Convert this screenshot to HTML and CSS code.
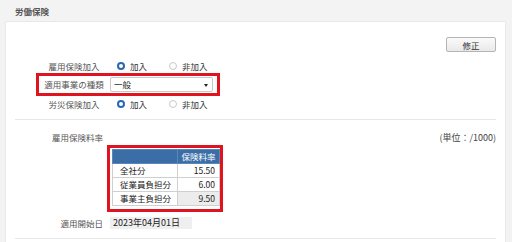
FILE: index.html
```html
<!DOCTYPE html>
<html lang="ja">
<head>
<meta charset="utf-8">
<link rel="stylesheet" href="styles.css">
</head>
<body>
<div class="titlebar">労働保険</div>
<div class="panel">
  <div class="toolbar"><button class="btn">修正</button></div>
  <div class="section1">
    <div class="row">
      <span class="label">雇用保険加入</span>
      <span class="radios">
        <span class="radio on"></span><span class="rtext">加入</span>
        <span class="radio"></span><span class="rtext">非加入</span>
      </span>
    </div>
    <div class="row">
      <div class="hl">
        <span class="label">適用事業の種類</span>
        <span class="select">一般<span class="caret"></span></span>
      </div>
    </div>
    <div class="row">
      <span class="label">労災保険加入</span>
      <span class="radios">
        <span class="radio on"></span><span class="rtext">加入</span>
        <span class="radio"></span><span class="rtext">非加入</span>
      </span>
    </div>
  </div>
  <div class="section2">
    <div class="rate-head">
      <span class="label2">雇用保険料率</span>
      <span class="unit">(単位：/1000)</span>
    </div>
    <div class="tablebox">
      <table class="rates">
        <thead><tr><th></th><th>保険料率</th></tr></thead>
        <tbody>
          <tr><td>全社分</td><td class="num">15.50</td></tr>
          <tr><td>従業員負担分</td><td class="num">6.00</td></tr>
          <tr><td>事業主負担分</td><td class="num calc">9.50</td></tr>
        </tbody>
      </table>
    </div>
    <div class="daterow">
      <span class="label2">適用開始日</span>
      <span class="datebox">2023年04月01日</span>
    </div>
  </div>
</div>
</body>
</html>
```

FILE: styles.css
```css
* { box-sizing: border-box; }
html, body { margin: 0; padding: 0; }
body {
  background: #f3f3f3;
  font-family: "Noto Sans CJK JP", "Noto Sans", sans-serif;
  font-size: 8.5px;
  color: #444;
  width: 512px;
  height: 242px;
  overflow: hidden;
}
.titlebar {
  height: 22px;
  line-height: 22px;
  padding-left: 15px;
  font-weight: bold;
  font-size: 8.5px;
  color: #555;
}
.panel {
  margin-left: 6px;
  width: 499px;
  height: 240px;
  background: #fff;
  box-shadow: 0 0 1px rgba(0,0,0,0.25);
  padding: 0 9px;
}
.toolbar {
  display: flex;
  justify-content: flex-end;
  padding-top: 15px;
}
.btn {
  width: 50px;
  height: 15px;
  padding: 0;
  margin: 0;
  font: inherit;
  color: #333;
  background: linear-gradient(#fafafa, #e9e9e9);
  border: 1px solid #b5b5b5;
  border-radius: 2px;
}
.section1 {
  margin-top: 4px;
  padding-bottom: 6px;
  border-bottom: 1px solid #e6e6e6;
}
.row {
  height: 19px;
  display: flex;
  align-items: center;
  padding-left: 29px;
}
.label {
  width: 60px;
  text-align: center;
  color: #555;
  flex: none;
  white-space: nowrap;
}
.radios {
  display: flex;
  align-items: center;
  margin-left: 13px;
}
.radio {
  width: 8px;
  height: 8px;
  border-radius: 50%;
  border: 1px solid #c8c8c8;
  margin-right: 5px;
  flex: none;
}
.radio.on { border: 2px solid #2b67b0; }
.rtext { color: #333; margin-right: 22px; }
.hl {
  display: flex;
  align-items: center;
  border: 3px solid #e0141e;
  padding: 1px 4px 1px 5px;
  margin: -3px 0 -2px -8px;
}
.select {
  margin-left: 6px;
  width: 103px;
  height: 15px;
  border: 1px solid #c9c9c9;
  border-radius: 2px;
  display: flex;
  align-items: center;
  padding-left: 3px;
  color: #222;
  position: relative;
}
.caret {
  position: absolute;
  right: 4px;
  top: 6px;
  border-left: 2px solid transparent;
  border-right: 2px solid transparent;
  border-top: 3px solid #222;
}
.section2 {
  padding-bottom: 8px;
  border-bottom: 1px solid #e6e6e6;
}
.rate-head {
  display: flex;
  justify-content: space-between;
  align-items: center;
  height: 16px;
  margin-top: 9px;
  padding-left: 30px;
}
.label2 {
  width: 58px;
  text-align: right;
  color: #555;
  flex: none;
  white-space: nowrap;
}
.unit { color: #444; font-size: 9px; }
.tablebox {
  margin-left: 92px;
  width: 116px;
  border: 3px solid #e0141e;
  padding: 1px 0 3px 2px;
}
.rates {
  border-collapse: collapse;
  width: 108px;
  table-layout: fixed;
}
.rates th, .rates td {
  height: 14px;
  padding: 0;
  font-weight: normal;
  line-height: 13px;
}
.rates th {
  background: #3b6ea6;
  color: #fff;
  border: 1px solid #5a86b8;
  text-align: center;
}
.rates th:first-child { width: 65px; }
.rates td {
  border: 1px solid #cfcfcf;
  color: #222;
  padding-left: 7px;
}
.rates td.num { text-align: right; padding-right: 4px; padding-left: 0; }
.rates td.calc { background: #ececec; }
.daterow {
  display: flex;
  align-items: center;
  height: 14px;
  margin-top: 4px;
  padding-left: 30px;
}
.datebox {
  margin-left: 7px;
  width: 82px;
  height: 12px;
  background: #efefef;
  color: #222;
  line-height: 12px;
  padding-left: 3px;
  font-size: 9px;
}
```
